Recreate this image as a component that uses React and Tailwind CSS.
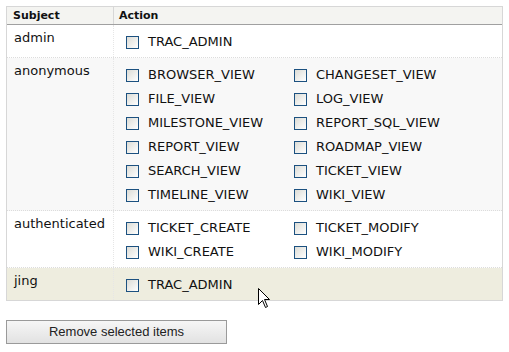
import React from 'react';

const rows = [
  { subject: 'admin', perms: ['TRAC_ADMIN'], bg: 'bg-white' },
  {
    subject: 'anonymous',
    perms: [
      'BROWSER_VIEW', 'CHANGESET_VIEW',
      'FILE_VIEW', 'LOG_VIEW',
      'MILESTONE_VIEW', 'REPORT_SQL_VIEW',
      'REPORT_VIEW', 'ROADMAP_VIEW',
      'SEARCH_VIEW', 'TICKET_VIEW',
      'TIMELINE_VIEW', 'WIKI_VIEW',
    ],
    bg: 'bg-[#f8f8f8]',
  },
  {
    subject: 'authenticated',
    perms: ['TICKET_CREATE', 'TICKET_MODIFY', 'WIKI_CREATE', 'WIKI_MODIFY'],
    bg: 'bg-white',
  },
  { subject: 'jing', perms: ['TRAC_ADMIN'], bg: 'bg-[#eeeddf]' },
];

// XP style checkbox
const Check = () => (
  <span className="block w-[13px] h-[13px] shrink-0 border border-[#1c5180] bg-gradient-to-br from-[#dcdcd6] to-white" />
);

const Cursor = () => (
  <svg className="absolute left-[258px] top-[288px]" width="13" height="21" viewBox="0 0 13 21">
    <path d="M0.5 0.5 L0.5 16.5 L4.5 12.5 L7.5 19.5 L9.5 18.5 L6.5 11.5 L11.5 11.5 Z" fill="white" stroke="black" strokeWidth="1" />
  </svg>
);

export default function App() {
  return (
    <div className="relative w-[509px] h-[352px] bg-white text-[#111] font-['DejaVu_Sans',Verdana,sans-serif]">
      <div className="ml-[6px] pt-[6px] w-[497px]">
        <div className="border-l border-r border-[#d7d7d7]">
          {/* header */}
          <div className="flex h-[19px] bg-[#f4f4f1] border-t border-b border-t-[#d7d7d7] border-b-[#a0a0a0] text-[11px] font-bold leading-[17px]">
            <div className="w-[107px] shrink-0 pl-[6px] border-r border-[#d7d7d7]">Subject</div>
            <div className="pl-[5px]">Action</div>
          </div>

          {rows.map((r, i) => (
            <div
              key={r.subject}
              className={`flex ${r.bg} border-b ${i === rows.length - 1 ? 'border-[#d7d7d7]' : 'border-dotted border-[#dcdcdc]'}`}
            >
              <div className="w-[107px] shrink-0 pl-[7px] pt-[5px] text-[13px] leading-[16px] border-r border-dotted border-[#e6e6e6]">
                {r.subject}
              </div>
              <div className="pl-[12px] pt-[5px] pb-[3px] grid grid-cols-[168px_168px]">
                {r.perms.map(p => (
                  <label key={p} className="h-[24px] flex items-center gap-[9px] text-[13px]">
                    <Check />
                    <span>{p}</span>
                  </label>
                ))}
              </div>
            </div>
          ))}
        </div>

        <button className="mt-[19px] w-[221px] h-[24px] border border-[#9a9a9a] bg-gradient-to-b from-[#f6f6f6] to-[#e2e2e2] text-[13px] text-[#222] font-['Liberation_Sans',Arial,sans-serif]">
          Remove selected items
        </button>
      </div>
      <Cursor />
    </div>
  );
}
